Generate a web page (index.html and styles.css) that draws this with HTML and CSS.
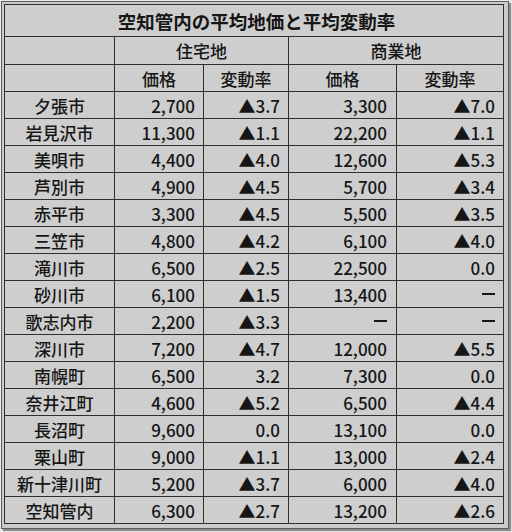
FILE: index.html
```html
<!DOCTYPE html>
<html lang="ja">
<head>
<meta charset="utf-8">
<link rel="stylesheet" href="styles.css">
</head>
<body>
<div class="frame">
  <div class="grid">
    <div class="c title">空知管内の平均地価と平均変動率</div>
    <div class="c"></div>
    <div class="c head span2">住宅地</div>
    <div class="c head span2">商業地</div>
    <div class="c"></div>
    <div class="c head">価格</div>
    <div class="c head">変動率</div>
    <div class="c head">価格</div>
    <div class="c head">変動率</div>

    <div class="c name">夕張市</div><div class="c num">2,700</div><div class="c num">▲3.7</div><div class="c num p2">3,300</div><div class="c num r2">▲7.0</div>
    <div class="c name">岩見沢市</div><div class="c num">11,300</div><div class="c num">▲1.1</div><div class="c num p2">22,200</div><div class="c num r2">▲1.1</div>
    <div class="c name">美唄市</div><div class="c num">4,400</div><div class="c num">▲4.0</div><div class="c num p2">12,600</div><div class="c num r2">▲5.3</div>
    <div class="c name">芦別市</div><div class="c num">4,900</div><div class="c num">▲4.5</div><div class="c num p2">5,700</div><div class="c num r2">▲3.4</div>
    <div class="c name">赤平市</div><div class="c num">3,300</div><div class="c num">▲4.5</div><div class="c num p2">5,500</div><div class="c num r2">▲3.5</div>
    <div class="c name">三笠市</div><div class="c num">4,800</div><div class="c num">▲4.2</div><div class="c num p2">6,100</div><div class="c num r2">▲4.0</div>
    <div class="c name">滝川市</div><div class="c num">6,500</div><div class="c num">▲2.5</div><div class="c num p2">22,500</div><div class="c num r2">0.0</div>
    <div class="c name">砂川市</div><div class="c num">6,100</div><div class="c num">▲1.5</div><div class="c num p2">13,400</div><div class="c num r2"><span class="dash"></span></div>
    <div class="c name">歌志内市</div><div class="c num">2,200</div><div class="c num">▲3.3</div><div class="c num p2"><span class="dash"></span></div><div class="c num r2"><span class="dash"></span></div>
    <div class="c name">深川市</div><div class="c num">7,200</div><div class="c num">▲4.7</div><div class="c num p2">12,000</div><div class="c num r2">▲5.5</div>
    <div class="c name">南幌町</div><div class="c num">6,500</div><div class="c num">3.2</div><div class="c num p2">7,300</div><div class="c num r2">0.0</div>
    <div class="c name">奈井江町</div><div class="c num">4,600</div><div class="c num">▲5.2</div><div class="c num p2">6,500</div><div class="c num r2">▲4.4</div>
    <div class="c name">長沼町</div><div class="c num">9,600</div><div class="c num">0.0</div><div class="c num p2">13,100</div><div class="c num r2">0.0</div>
    <div class="c name">栗山町</div><div class="c num">9,000</div><div class="c num">▲1.1</div><div class="c num p2">13,000</div><div class="c num r2">▲2.4</div>
    <div class="c name">新十津川町</div><div class="c num">5,200</div><div class="c num">▲3.7</div><div class="c num p2">6,000</div><div class="c num r2">▲4.0</div>
    <div class="c name">空知管内</div><div class="c num">6,300</div><div class="c num">▲2.7</div><div class="c num p2">13,200</div><div class="c num r2">▲2.6</div>
  </div>
</div>
</body>
</html>
```
FILE: styles.css
```css
html, body {
  margin: 0;
  padding: 0;
  background: #ececec;
}
body {
  width: 512px;
  height: 532px;
  overflow: hidden;
  font-family: "Noto Sans CJK JP", "Noto Sans", sans-serif;
  color: #161616;
}
.frame {
  margin: 1px 0 0 1px;
  width: 500px;
  height: 520px;
  padding: 2px 4px 4px 2px;
  border: 1px solid #5a5a5a;
  background: #cbcbcb;
  box-shadow: 2px 2px 1px #8c8c8c;
}
.grid {
  display: grid;
  grid-template-columns: 110px 89px 85px 108px 107px;
  grid-template-rows: 32px 28px 27px repeat(16, 27px);
  border-left: 1px solid #2f2f2f;
  border-top: 1px solid #2f2f2f;
  background: #cecece;
}
.c {
  box-sizing: border-box;
  border-right: 1px solid #2f2f2f;
  border-bottom: 1px solid #2f2f2f;
  display: flex;
  align-items: center;
  font-size: 17px;
  font-weight: 500;
  line-height: 1;
}
.title {
  grid-column: 1 / -1;
  justify-content: center;
  font-weight: 700;
  font-size: 18.5px;
  padding-left: 5px;
  padding-top: 1px;
}
.head {
  justify-content: center;
}
.span2 {
  grid-column: span 2;
}
.name {
  justify-content: center;
}
.num {
  justify-content: flex-end;
  padding-right: 8px;
}
.p2 {
  padding-right: 9px;
}
.r2 {
  padding-right: 8px;
}
.dash {
  display: inline-block;
  width: 13px;
  height: 2px;
  background: #161616;
}
```
